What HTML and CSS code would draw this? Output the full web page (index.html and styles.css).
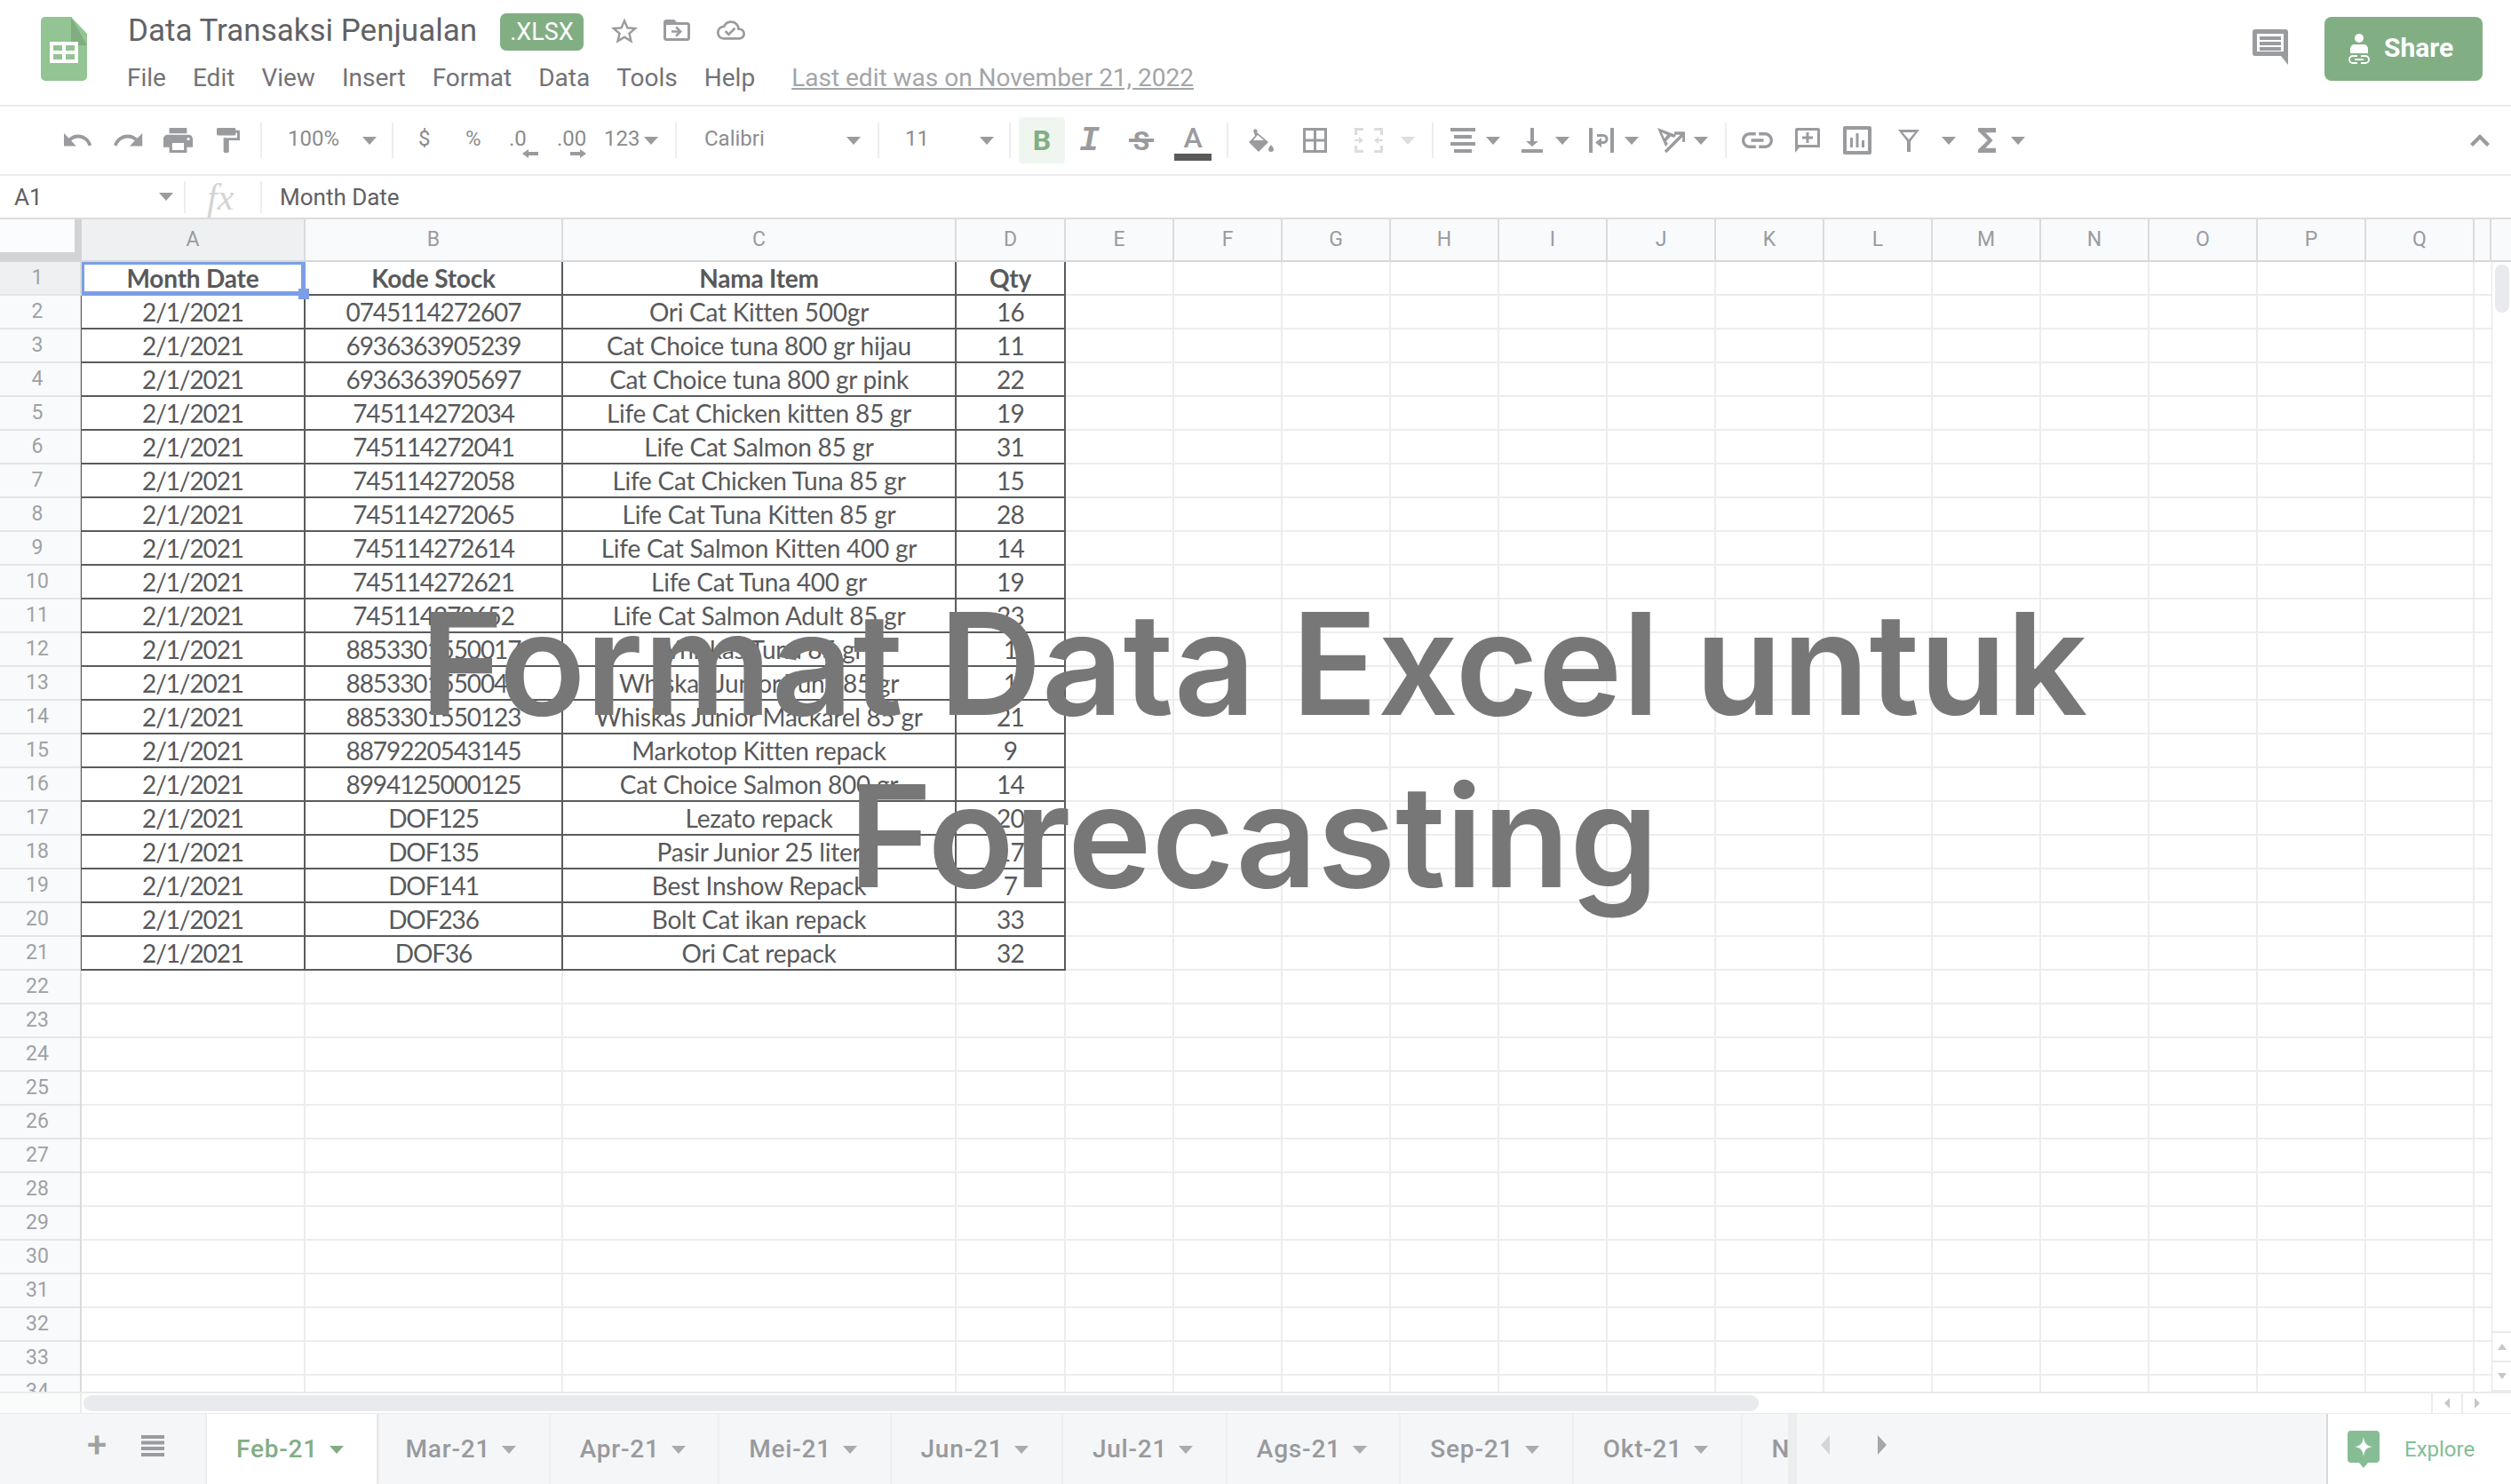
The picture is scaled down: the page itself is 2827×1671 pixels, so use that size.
FILE: index.html
```html
<!DOCTYPE html>
<html>
<head>
<title>Data Transaksi Penjualan</title>
<meta charset="utf-8" />
<link rel="stylesheet" href="styles.css">
</head>
<body>
<div class="page">

  <header class="titlebar">
    <svg class="logo" viewBox="0 0 52 72"><path d="M5 0H34L52 19V67a5 5 0 0 1-5 5H5a5 5 0 0 1-5-5V5a5 5 0 0 1 5-5z" fill="#93c493"/><path d="M34 0L52 32H34z" fill="#7fae80"/><path d="M10 28H42V52H10zM14 32V38H24V32zM28 32V38H38V32zM14 42V48H24V42zM28 42V48H38V42z" fill="#fff" fill-rule="evenodd"/></svg>
    <div class="docinfo">
      <div class="docname">
        <span class="doctitle">Data Transaksi Penjualan</span>
        <span class="badge">.XLSX</span>
        <svg class="ic star" viewBox="2 2 20 19"><path d="M22 9.24l-7.19-.62L12 2 9.19 8.63 2 9.24l5.46 4.73L5.82 21 12 17.27 18.18 21l-1.63-7.03L22 9.24zM12 15.4l-3.76 2.27 1-4.28-3.32-2.88 4.38-.38L12 6.1l1.71 4.04 4.38.38-3.32 2.88 1 4.28L12 15.4z"/></svg>
        <svg class="ic folder" viewBox="2 4 20 16"><path d="M20 6h-8l-2-2H4c-1.1 0-2 .9-2 2v12c0 1.1.9 2 2 2h16c1.1 0 2-.9 2-2V8c0-1.1-.9-2-2-2zm0 12H4V8h16v10z"/><path d="M12 9l4 4-4 4-1.2-1.2 1.9-1.9H8v-1.8h4.7l-1.9-1.9z"/></svg>
        <svg class="ic cloud" viewBox="0 4 24 16"><path d="M19.35 10.04C18.67 6.59 15.64 4 12 4 9.11 4 6.6 5.64 5.35 8.04 2.34 8.36 0 10.91 0 14c0 3.31 2.69 6 6 6h13c2.76 0 5-2.24 5-5 0-2.64-2.05-4.78-4.65-4.96zM19 18H6c-2.21 0-4-1.79-4-4s1.79-4 4-4h.71C7.37 7.69 9.48 6 12 6c3.04 0 5.5 2.46 5.5 5.5v.5H19c1.66 0 3 1.34 3 3s-1.34 3-3 3zm-9-3.82l-2.09-2.09L6.5 13.5 10 17l6.01-6.01-1.41-1.41z"/></svg>
      </div>
      <nav class="menubar">
        <span>File</span><span>Edit</span><span>View</span><span>Insert</span><span>Format</span><span>Data</span><span>Tools</span><span>Help</span>
        <a class="lastedit">Last edit was on November 21, 2022</a>
      </nav>
    </div>
    <svg class="ic comments" viewBox="0 0 40 40"><path d="M3 0H37a3 3 0 0 1 3 3V40L32 30H3a3 3 0 0 1-3-3V3a3 3 0 0 1 3-3zM5 5V25H35V5zM8 8H32V12H8zM8 14H32V18H8zM8 20H32V24H8z" fill-rule="evenodd"/></svg>
    <button class="share">
      <svg viewBox="0 0 26 34" class="shareicon"><circle cx="13" cy="5" r="5" fill="#fff"/><path d="M3 22V17a5 5 0 0 1 5-5H18a5 5 0 0 1 5 5V22z" fill="#fff"/><path d="M11 25H6a4 4 0 0 0 0 8H11M15 25H20a4 4 0 0 1 0 8H15M8 29H18" fill="none" stroke="#fff" stroke-width="1.8"/></svg>
      Share
    </button>
  </header>

  <div class="toolbar">
    <svg class="ic" width="32" height="16" viewBox="2 7 21 10" preserveAspectRatio="none"><path d="M12.5 8c-2.65 0-5.05.99-6.9 2.6L2 7v9h9l-3.62-3.62c1.39-1.16 3.16-1.88 5.12-1.88 3.54 0 6.55 2.31 7.6 5.5l2.37-.78C21.08 11.03 17.15 8 12.5 8z"/></svg>
    <svg class="ic" width="33" height="16" viewBox="1.5 7 21 10" preserveAspectRatio="none"><path d="M18.4 10.6C16.55 8.99 14.15 8 11.5 8c-4.65 0-8.58 3.03-9.96 7.22L3.9 16c1.05-3.19 4.05-5.5 7.6-5.5 1.95 0 3.73.72 5.12 1.88L13 16h9V7l-3.6 3.6z"/></svg>
    <svg class="ic" width="33" height="28" viewBox="2 3 20 18" preserveAspectRatio="none"><path d="M19 8H5c-1.66 0-3 1.34-3 3v6h4v4h12v-4h4v-6c0-1.66-1.34-3-3-3zm-3 11H8v-5h8v5zm3-7c-.55 0-1-.45-1-1s.45-1 1-1 1 .45 1 1-.45 1-1 1zm-1-9H6v4h12V3z"/></svg>
    <svg class="ic" width="26" height="28" viewBox="4 2 17 20" preserveAspectRatio="none"><path d="M18 4V3c0-.55-.45-1-1-1H5c-.55 0-1 .45-1 1v4c0 .55.45 1 1 1h12c.55 0 1-.45 1-1V6h1v4H9v11c0 .55.45 1 1 1h2c.55 0 1-.45 1-1v-9h8V4h-3z"/></svg>
    <i class="sep"></i>
    <span class="tb-text">100%</span>
    <i class="caret"></i>
    <i class="sep"></i>
    <span class="tb-text">$</span>
    <span class="tb-text">%</span>
    <span class="decimal">.0<svg class="ic" width="18" height="10" viewBox="0 0 18 10"><path d="M0 5L7 0V3H18V7H7V10z"/></svg></span>
    <span class="decimal wide">.00<svg class="ic" width="18" height="10" viewBox="0 0 18 10"><path d="M18 5L11 0V3H0V7H11V10z"/></svg></span>
    <span class="tb-text">123</span>
    <i class="caret"></i>
    <i class="sep"></i>
    <span class="tb-text">Calibri</span>
    <i class="caret"></i>
    <i class="sep"></i>
    <span class="tb-text">11</span>
    <i class="caret"></i>
    <i class="sep"></i>
    <span class="boldbtn">B</span>
    <span class="tb-italic">I</span>
    <span class="tb-strike">S</span>
    <span class="colorbtn">A</span>
    <i class="sep"></i>
    <svg class="ic" width="29" height="27" viewBox="0 0 29 27"><path d="M7 0L10 2 9 4 22 15 11 26 0 15 7 8 5 2zM10 7L5 13H17zM25 18c2 2.500 3 4 3 5a3 3 0 0 1-6 0c0-1 1-2.500 3-5z" fill-rule="evenodd"/></svg>
    <svg class="ic" width="27" height="28" viewBox="3 3 18 18" preserveAspectRatio="none"><path d="M3 3v18h18V3H3zm8 16H5v-6h6v6zm0-8H5V5h6v6zm8 8h-6v-6h6v6zm0-8h-6V5h6v6z"/></svg>
    <svg class="ic light" width="32" height="28" viewBox="0 0 32 28"><path d="M0 0H10V3H3V8H0zM22 0H32V8H29V3H22zM0 20H3V25H10V28H0zM29 20H32V28H22V25H29zM0 13H5V10L10 14 5 18V15H0zM32 13H27V10L22 14 27 18V15H32z"/></svg>
    <i class="caret light"></i>
    <i class="sep"></i>
    <svg class="ic" width="28" height="28" viewBox="0 0 28 28"><path d="M0 0H28V4H0zM4 8H24V12H4zM0 16H28V20H0zM4 24H24V28H4z"/></svg>
    <i class="caret"></i>
    <svg class="ic" width="24" height="28" viewBox="0 0 24 28"><path d="M10 0H14V15H19L12 21 5 15H10zM0 24H24V28H0z"/></svg>
    <i class="caret"></i>
    <svg class="ic" width="28" height="28" viewBox="0 0 28 28"><path d="M0 0H4V28H0zM24 0H28V28H24zM9 7H16a5 5 0 0 1 0 11H14V22L7 16.500 14 11V15H16a2 2 0 0 0 0-5H9z"/></svg>
    <i class="caret"></i>
    <svg class="ic" width="31" height="28" viewBox="0 0 31 28"><path d="M0 0L21 8 19 11 15 9.500 10 15 12 18 9 21zM5 5L8 12 11 8z" fill-rule="evenodd"/><path d="M9 27L29 7M19 6H30V16" fill="none" stroke="#9a9b9e" stroke-width="3.500"/></svg>
    <i class="caret"></i>
    <i class="sep"></i>
    <svg class="ic" width="35" height="18" viewBox="2 7 20 10" preserveAspectRatio="none"><path d="M3.900 12c0-1.710 1.390-3.100 3.100-3.100h4V7H7c-2.760 0-5 2.240-5 5s2.240 5 5 5h4v-1.900H7c-1.710 0-3.100-1.390-3.100-3.100zM8 13h8v-2H8v2zm9-6h-4v1.900h4c1.710 0 3.100 1.390 3.100 3.100s-1.390 3.100-3.100 3.100h-4V17h4c2.760 0 5-2.240 5-5s-2.240-5-5-5z"/></svg>
    <svg class="ic" width="28" height="28" viewBox="0 0 28 28"><path d="M2 0H26a2 2 0 0 1 2 2V22H5L0 28V2a2 2 0 0 1 2-2zM3 3V19H25V3zM12.500 5H15.500V9.500H20V12.500H15.500V17H12.500V12.500H8V9.500H12.500z" fill-rule="evenodd"/></svg>
    <svg class="ic" width="32" height="32" viewBox="0 0 32 32"><path d="M2 0H30a2 2 0 0 1 2 2V30a2 2 0 0 1-2 2H2a2 2 0 0 1-2-2V2a2 2 0 0 1 2-2zM4 4V28H28V4zM8 13H11V24H8zM14.500 8H17.500V24H14.500zM21 16H24V24H21z" fill-rule="evenodd"/></svg>
    <svg class="ic" width="24" height="25" viewBox="0 0 24 25"><path d="M0 0H24L14 13V25H10V13zM5 3L12 11 19 3z" fill-rule="evenodd"/></svg>
    <i class="caret"></i>
    <svg class="ic" width="20" height="28" viewBox="6 4 12 16" preserveAspectRatio="none"><path d="M18 4H6v2l6.500 6L6 18v2h12v-3h-7l5-5-5-5h7z"/></svg>
    <i class="caret"></i>
    <svg class="ic" width="22" height="14" viewBox="0 0 22 14"><path d="M11 0L22 11 19 14 11 6 3 14 0 11z"/></svg>
  </div>

  <div class="formulabar">
    <span class="cellref">A1</span>
    <i class="caret"></i>
    <i class="sep"></i>
    <span class="fx">fx</span>
    <i class="sep"></i>
    <span class="formula">Month Date</span>
  </div>

  <div class="colheads">
    <div class="corner"></div>
    <div class="colhead active">A</div>
    <div class="colhead">B</div>
    <div class="colhead">C</div>
    <div class="colhead">D</div>
    <div class="colhead">E</div>
    <div class="colhead">F</div>
    <div class="colhead">G</div>
    <div class="colhead">H</div>
    <div class="colhead">I</div>
    <div class="colhead">J</div>
    <div class="colhead">K</div>
    <div class="colhead">L</div>
    <div class="colhead">M</div>
    <div class="colhead">N</div>
    <div class="colhead">O</div>
    <div class="colhead">P</div>
    <div class="colhead">Q</div>
    <div class="colhead"></div>
  </div>

  <div class="sheet">
    <div class="rownums">
      <div class="active">1</div><div>2</div><div>3</div><div>4</div><div>5</div><div>6</div><div>7</div><div>8</div><div>9</div><div>10</div>
      <div>11</div><div>12</div><div>13</div><div>14</div><div>15</div><div>16</div><div>17</div><div>18</div><div>19</div><div>20</div>
      <div>21</div><div>22</div><div>23</div><div>24</div><div>25</div><div>26</div><div>27</div><div>28</div><div>29</div><div>30</div>
      <div>31</div><div>32</div><div>33</div><div>34</div>
    </div>
    <div class="cells">
      <table class="data">
        <colgroup><col class="col-a"><col class="col-b"><col class="col-c"><col class="col-d"></colgroup>
        <tr class="head"><td class="selected">Month Date<i class="handle"></i></td><td>Kode Stock</td><td>Nama Item</td><td>Qty</td></tr>
        <tr><td>2/1/2021</td><td>0745114272607</td><td>Ori Cat Kitten 500gr</td><td>16</td></tr>
        <tr><td>2/1/2021</td><td>6936363905239</td><td>Cat Choice tuna 800 gr hijau</td><td>11</td></tr>
        <tr><td>2/1/2021</td><td>6936363905697</td><td>Cat Choice tuna 800 gr pink</td><td>22</td></tr>
        <tr><td>2/1/2021</td><td>745114272034</td><td>Life Cat Chicken kitten 85 gr</td><td>19</td></tr>
        <tr><td>2/1/2021</td><td>745114272041</td><td>Life Cat Salmon 85 gr</td><td>31</td></tr>
        <tr><td>2/1/2021</td><td>745114272058</td><td>Life Cat Chicken Tuna 85 gr</td><td>15</td></tr>
        <tr><td>2/1/2021</td><td>745114272065</td><td>Life Cat Tuna Kitten 85 gr</td><td>28</td></tr>
        <tr><td>2/1/2021</td><td>745114272614</td><td>Life Cat Salmon Kitten 400 gr</td><td>14</td></tr>
        <tr><td>2/1/2021</td><td>745114272621</td><td>Life Cat Tuna 400 gr</td><td>19</td></tr>
        <tr><td>2/1/2021</td><td>745114272652</td><td>Life Cat Salmon Adult 85 gr</td><td>23</td></tr>
        <tr><td>2/1/2021</td><td>8853301550017</td><td>Whiskas Tuna 85 gr</td><td>1</td></tr>
        <tr><td>2/1/2021</td><td>8853301550048</td><td>Whiskas Junior Tuna 85 gr</td><td>1</td></tr>
        <tr><td>2/1/2021</td><td>8853301550123</td><td>Whiskas Junior Mackarel 85 gr</td><td>21</td></tr>
        <tr><td>2/1/2021</td><td>8879220543145</td><td>Markotop Kitten repack</td><td>9</td></tr>
        <tr><td>2/1/2021</td><td>8994125000125</td><td>Cat Choice Salmon 800 gr</td><td>14</td></tr>
        <tr><td>2/1/2021</td><td>DOF125</td><td>Lezato repack</td><td>20</td></tr>
        <tr><td>2/1/2021</td><td>DOF135</td><td>Pasir Junior 25 liter</td><td>17</td></tr>
        <tr><td>2/1/2021</td><td>DOF141</td><td>Best Inshow Repack</td><td>7</td></tr>
        <tr><td>2/1/2021</td><td>DOF236</td><td>Bolt Cat ikan repack</td><td>33</td></tr>
        <tr><td>2/1/2021</td><td>DOF36</td><td>Ori Cat repack</td><td>32</td></tr>
      </table>
    </div>
    <div class="vscroll">
      <div class="vtrack"><div class="vthumb"></div></div>
      <div class="vbtn"><i class="tri-up"></i></div>
      <div class="vbtn"><i class="tri-down"></i></div>
      <div class="vend"></div>
    </div>
  </div>

  <div class="hscroll">
    <div class="hscroll-left"></div>
    <div class="hthumb"></div>
    <div class="hbtn"><i class="tri-left"></i></div>
    <div class="hbtn"><i class="tri-right"></i></div>
  </div>

  <footer class="tabbar">
    <div class="tabtools">
      <span class="addsheet">+</span>
      <svg class="ic" width="26" height="24" viewBox="0 0 26 24"><path d="M0 0H26V4H0zM0 6.500H26V10.500H0zM0 13H26V17H0zM0 20H26V24H0z"/></svg>
    </div>
    <div class="tabs">
      <div class="tab current">Feb-21<i class="caret"></i></div>
      <div class="tab">Mar-21<i class="caret"></i></div>
      <div class="tab">Apr-21<i class="caret"></i></div>
      <div class="tab">Mei-21<i class="caret"></i></div>
      <div class="tab">Jun-21<i class="caret"></i></div>
      <div class="tab">Jul-21<i class="caret"></i></div>
      <div class="tab">Ags-21<i class="caret"></i></div>
      <div class="tab">Sep-21<i class="caret"></i></div>
      <div class="tab">Okt-21<i class="caret"></i></div>
      <div class="tab">Nov-21<i class="caret"></i></div>
    </div>
    <div class="tabnav">
      <i class="nav-left"></i>
      <i class="nav-right"></i>
    </div>
    <div class="explore">
      <svg width="36" height="42" viewBox="0 0 36 42"><path d="M4 0H32a4 4 0 0 1 4 4V32a4 4 0 0 1-4 4H23L18 42 13 36H4a4 4 0 0 1-4-4V4a4 4 0 0 1 4-4z" fill="#86bd95"/><path d="M18 7C19 14 21 17 28 18 21 19 19 22 18 29 17 22 15 19 8 18 15 17 17 14 18 7z" fill="#fff"/></svg>
      <span>Explore</span>
    </div>
  </footer>

  <div class="overlay">
    <h1>Format Data Excel untuk<br>Forecasting</h1>
  </div>
</div>
</body>
</html>
```

FILE: styles.css
```css
body {
  margin: 0;
  background: #fff;
  font-family: Roboto, "Liberation Sans", sans-serif;
  color: #5f6063;
}

.page {
  position: relative;
  width: 2827px;
  height: 1671px;
  overflow: hidden;
  display: flex;
  flex-direction: column;
}

i {
  font-style: normal;
}

.ic {
  fill: #9a9b9e;
  display: block;
}

.ic.light {
  fill: #dcdcdc;
}

.caret {
  display: block;
  width: 0;
  height: 0;
  border-left: 8px solid transparent;
  border-right: 8px solid transparent;
  border-top: 9px solid #9a9b9e;
}

.caret.light {
  border-top-color: #dedede;
}

.sep {
  display: block;
  width: 2px;
  height: 40px;
  background: #eceded;
}

/* title row */
.titlebar {
  height: 118px;
  flex: none;
  display: flex;
  border-bottom: 2px solid #ebebeb;
  padding-left: 46px;
  padding-right: 32px;
}

.logo {
  width: 52px;
  height: 72px;
  margin-top: 19px;
}

.docinfo {
  margin-left: 45px;
  flex: 1;
}

.docname {
  height: 42px;
  margin-top: 15px;
  display: flex;
  align-items: center;
}

.doctitle {
  font-size: 35px;
  line-height: 38px;
  margin-top: -3px;
  color: #616265;
  width: 419px;
  margin-left: 1px;
}

.badge {
  width: 94px;
  height: 42px;
  border-radius: 7px;
  background: #82ae84;
  color: #fff;
  font-size: 27px;
  display: flex;
  align-items: center;
  justify-content: center;
}

.star {
  width: 30px;
  height: 29px;
  margin-left: 31px;
  margin-top: -4px;
}

.folder {
  width: 30px;
  height: 24px;
  margin-left: 29px;
  margin-top: -4px;
}

.cloud {
  width: 32px;
  height: 22px;
  margin-left: 30px;
  margin-top: -4px;
}

.menubar {
  display: flex;
  margin-top: 13px;
  font-size: 28px;
  line-height: 36px;
  color: #727376;
}

.menubar span {
  margin-right: 30px;
}

.lastedit {
  color: #a3a5a8;
  text-decoration: underline;
  margin-left: 11px;
}

.comments {
  width: 40px;
  height: 40px;
  margin-top: 33px;
  margin-right: 41px;
}

.share {
  width: 178px;
  height: 72px;
  margin-top: 19px;
  border: 0;
  border-radius: 8px;
  background: #82ae84;
  color: #fff;
  font: 700 30px Roboto, sans-serif;
  display: flex;
  align-items: center;
  padding: 0 0 4px 26px;
  gap: 15px;
}

.shareicon {
  width: 26px;
  height: 34px;
  margin-top: 4px;
}

/* toolbar, one track per control, measured from left edge to left edge */
.toolbar {
  height: 76px;
  flex: none;
  border-bottom: 2px solid #ebebeb;
  padding-left: 72px;
  display: grid;
  grid-template-columns:
    56px 56px 60px 49px 31px 84px 33px 30px 53px 49px 54px 53px 45px 35px 33px 160px
    35px 31px 84px 33px 11px 70px 54px 51px 59px 25px 61px 58px 52px 35px 21px 40px
    40px 38px 38px 40px 37px 41px 35px 19px 60px 54px 62px 49px 41px 37px 517px auto;
  align-items: center;
  justify-items: start;
}

.tb-text {
  font-size: 24px;
  color: #8b8c8f;
  margin-top: -4px;
}

.decimal {
  display: block;
  position: relative;
  font-size: 24px;
  color: #8b8c8f;
  width: 34px;
  margin-top: -4px;
}

.decimal .ic {
  position: absolute;
  left: 15px;
  top: 26px;
}

.boldbtn {
  width: 52px;
  height: 52px;
  border-radius: 4px;
  background: #eff6f0;
  color: #82ae84;
  font: 700 32px Roboto, sans-serif;
  display: flex;
  align-items: center;
  justify-content: center;
}

.tb-italic {
  font: italic 700 38px "Liberation Mono", monospace;
  color: #9a9b9e;
  margin-left: -2px;
}

.tb-strike {
  position: relative;
  font: 700 30px Roboto, sans-serif;
  color: #9a9b9e;
  width: 28px;
  text-align: center;
}

.tb-strike::after {
  content: "";
  position: absolute;
  left: 0;
  right: 0;
  top: 15px;
  height: 4px;
  background: #9a9b9e;
}

.colorbtn {
  width: 42px;
  text-align: center;
  font-size: 32px;
  font-weight: 500;
  line-height: 30px;
  color: #9a9b9e;
  border-bottom: 8px solid #5b5b5b;
  padding-bottom: 3px;
  margin-top: 5px;
}

/* formula bar */
.formulabar {
  height: 47px;
  flex: none;
  display: flex;
  align-items: center;
  padding-left: 16px;
}

.cellref {
  font-size: 26px;
  width: 163px;
  color: #5f6063;
}

.formulabar .sep {
  height: 36px;
  margin-left: 12px;
}

.fx {
  font: italic 42px "Liberation Serif", serif;
  color: #d4d4d4;
  width: 60px;
  margin-left: 24px;
  margin-right: -12px;
}

.formula {
  font-size: 26px;
  margin-left: 20px;
}

/* column letters */
.colheads {
  height: 46px;
  flex: none;
  display: grid;
  grid-template-columns: 92px 252px 290px 443px 123px repeat(13, 122px) 19px 22px;
  border-top: 2px solid #dadbdc;
  border-bottom: 2px solid #d6d7d8;
  background: #f9fafc;
}

.corner {
  background: #fbfcfd;
  border-right: 8px solid #d2d3d4;
  border-bottom: 9px solid #d2d3d4;
}

.colhead {
  border-right: 2px solid #dadbdc;
  font-size: 23px;
  line-height: 46px;
  text-align: center;
  color: #9a9b9e;
}

.colhead.active {
  background: #eff0f2;
}

/* grid area */
.sheet {
  height: 273px;
  flex: 1;
  display: flex;
  overflow: hidden;
  border-bottom: 2px solid #ebebeb;
}

.rownums {
  width: 92px;
  flex: none;
  background: #f9fafc;
  border-right: 2px solid #dadbdc;
  box-sizing: border-box;
}

.rownums div {
  height: 38px;
  box-sizing: border-box;
  border-bottom: 2px solid #e4e5e6;
  font-size: 23px;
  line-height: 35px;
  text-align: center;
  color: #a0a1a4;
  padding-right: 6px;
}

.rownums .active {
  background: #eff0f2;
}

.cells {
  flex: 1;
  background-color: #fff;
  background-image:
    linear-gradient(#ededed, #ededed),
    linear-gradient(#ededed, #ededed),
    linear-gradient(#ededed, #ededed),
    linear-gradient(#ededed, #ededed),
    repeating-linear-gradient(90deg, transparent 0, transparent 120px, #ededed 120px, #ededed 122px),
    repeating-linear-gradient(180deg, transparent 0, transparent 36px, #ededed 36px, #ededed 38px);
  background-size: 2px 100%, 2px 100%, 2px 100%, 2px 100%, 1586px 100%, 100% 100%;
  background-position: 250px 0, 540px 0, 983px 0, 1106px 0, 1108px 0, 0 0;
  background-repeat: no-repeat;
}

.data {
  border-collapse: separate;
  border-spacing: 0;
  table-layout: fixed;
  width: 1108px;
  background: #fff;
  font-family: Lato, sans-serif;
  font-size: 28px;
  color: #58595b;
}

.col-a { width: 252px; }
.col-b { width: 290px; }
.col-c { width: 443px; }
.col-d { width: 123px; }

.data td {
  height: 38px;
  padding: 0;
  box-sizing: border-box;
  border-right: 2px solid #5a5b5d;
  border-bottom: 2px solid #5a5b5d;
  text-align: center;
  white-space: nowrap;
  line-height: 35px;
}

.data td:nth-child(1),
.data td:nth-child(2) {
  letter-spacing: -1.1px;
}

.data td:nth-child(3) {
  letter-spacing: -0.25px;
}

.data td:nth-child(4) {
  letter-spacing: -0.8px;
}

.data td:first-child {
  box-shadow: -1px 0 0 #5a5b5d;
}

.data .head td {
  font-weight: 700;
  letter-spacing: -0.2px;
}

.data td.selected {
  position: relative;
  box-shadow: inset 0 0 0 3px #7b9fe6;
  border-color: #7b9fe6;
}

.handle {
  position: absolute;
  right: -6px;
  bottom: -6px;
  width: 12px;
  height: 12px;
  background: #7b9fe6;
  z-index: 2;
}

/* scrollbars */
.vscroll {
  width: 22px;
  flex: none;
  display: flex;
  flex-direction: column;
  background: #fff;
  border-left: 1px solid #e4e5e6;
  box-sizing: border-box;
}

.vtrack {
  height: 1208px;
  padding: 3px 2px 0 3px;
  box-sizing: border-box;
}

.vthumb {
  height: 54px;
  border-radius: 9px;
  background: #e8eaed;
}

.vbtn {
  height: 33px;
  border-top: 2px solid #ebebeb;
  box-sizing: border-box;
  display: flex;
  align-items: center;
  justify-content: center;
}

.vend {
  flex: 1;
  border-top: 2px solid #ebebeb;
}

.tri-up,
.tri-down {
  width: 0;
  height: 0;
  border-left: 5px solid transparent;
  border-right: 5px solid transparent;
}

.tri-up { border-bottom: 7px solid #c6c7c9; }
.tri-down { border-top: 7px solid #c6c7c9; }

.hscroll {
  height: 22px;
  flex: none;
  display: flex;
  align-items: stretch;
  padding-right: 22px;
  border-bottom: 1px solid #ebebeb;
}

.hscroll-left {
  width: 92px;
  flex: none;
  background: #fafbfb;
  border-right: 2px solid #ebebeb;
  box-sizing: border-box;
}

.hthumb {
  width: 1890px;
  height: 18px;
  margin: 2px 757px 0 2px;
  border-radius: 9px;
  background: #e8eaed;
}

.hbtn {
  width: 32px;
  border-left: 2px solid #ebebeb;
  display: flex;
  align-items: center;
  justify-content: center;
}

.tri-left,
.tri-right {
  width: 0;
  height: 0;
  border-top: 6px solid transparent;
  border-bottom: 6px solid transparent;
}

.tri-left { border-right: 6px solid #c6c7c9; }
.tri-right { border-left: 6px solid #c6c7c9; }

/* sheet tabs */
.tabbar {
  height: 79px;
  flex: none;
  display: flex;
  background: #f5f6f8;
}

.tabtools {
  width: 233px;
  flex: none;
  box-sizing: border-box;
  display: flex;
  align-items: center;
  padding-left: 98px;
  padding-bottom: 8px;
  box-shadow: inset -3px 0 2px -2px #e3e4e6;
}

.addsheet {
  font: 500 40px Roboto, sans-serif;
  color: #a0a1a4;
  width: 61px;
  line-height: 40px;
}

.tabs {
  width: 1780px;
  flex: none;
  display: flex;
  overflow: hidden;
  border-right: 10px solid #eceded;
  box-sizing: content-box;
}

.tab {
  flex: none;
  display: flex;
  align-items: center;
  gap: 13px;
  box-sizing: border-box;
  padding: 0 36.5px 0 33px;
  font-size: 28px;
  font-weight: 500;
  letter-spacing: 0.8px;
  color: #989a9d;
  border-right: 2px solid #eeeff1;
}

.tab .caret {
  border-top-color: #a9abae;
  margin-top: 2px;
}

.tab.current {
  background: #fff;
  color: #82ae84;
  box-shadow: 2px 0 2px #e3e4e6;
  border-right: 0;
}

.tab.current .caret {
  border-top-color: #82ae84;
}

.tabnav {
  flex: 1;
  display: flex;
  align-items: center;
  gap: 54px;
  padding-left: 27px;
  padding-bottom: 10px;
}

.nav-left {
  width: 0;
  height: 0;
  border-top: 11px solid transparent;
  border-bottom: 11px solid transparent;
  border-right: 10px solid #d4d5d6;
}

.nav-right {
  width: 0;
  height: 0;
  border-top: 11px solid transparent;
  border-bottom: 11px solid transparent;
  border-left: 10px solid #a6a7a9;
}

.explore {
  width: 208px;
  flex: none;
  box-sizing: border-box;
  background: #fff;
  border-left: 2px solid #d8d9da;
  display: flex;
  align-items: center;
  gap: 28px;
  padding-left: 22px;
  font-size: 24px;
  color: #83bd96;
}

/* big caption over the sheet */
.overlay {
  position: absolute;
  left: 0;
  right: 4px;
  top: 650px;
  text-align: center;
}

.overlay h1 {
  margin: 0;
  font-family: Inter, sans-serif;
  font-weight: 600;
  font-size: 160px;
  line-height: 194px;
  color: #777;
}
```
